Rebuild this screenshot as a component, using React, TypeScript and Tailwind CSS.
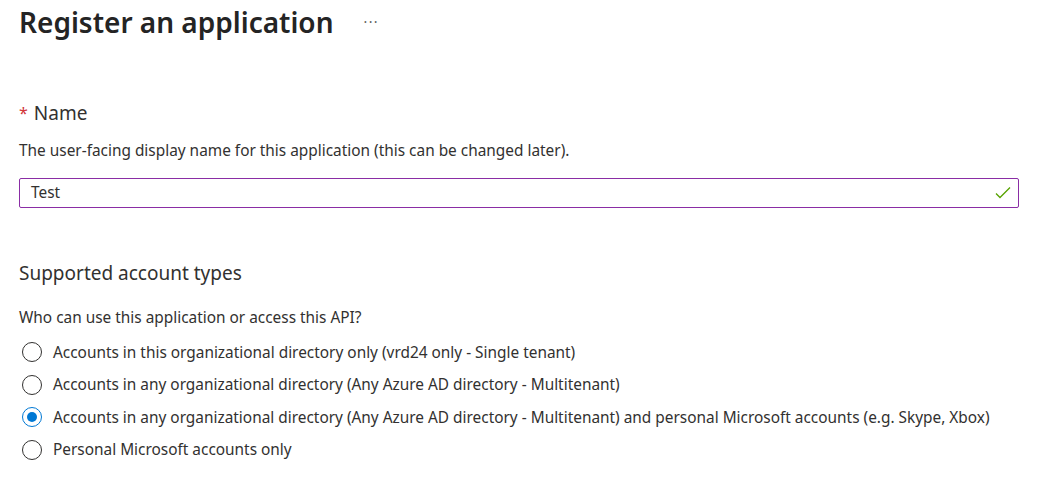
const options = [
  "Accounts in this organizational directory only (vrd24 only - Single tenant)",
  "Accounts in any organizational directory (Any Azure AD directory - Multitenant)",
  "Accounts in any organizational directory (Any Azure AD directory - Multitenant) and personal Microsoft accounts (e.g. Skype, Xbox)",
  "Personal Microsoft accounts only",
];

const Radio = ({ checked }: { checked: boolean }) => (
  <span className={`w-5 h-5 rounded-full border flex items-center justify-center shrink-0 ${checked ? "border-[#0078d4]" : "border-[#323130]"}`}>
    {checked && <span className="w-2.5 h-2.5 rounded-full bg-[#0078d4]" />}
  </span>
);

const App = () => {
  return (
    <div className="w-[1060px] h-[482px] bg-white text-[#323130] font-['Noto_Sans',sans-serif] overflow-hidden">
      <div className="pl-[19px] pr-[41px]">
        <header className="flex items-center h-[44px]">
          <h1 className="text-[28px] font-semibold text-[#242424] leading-none">Register an application</h1>
          <span className="ml-[30px] text-[#605e5c] text-sm tracking-widest">···</span>
        </header>

        <section className="mt-[57px]">
          <div className="flex items-center text-[19px] leading-6">
            <span className="text-[#d13438] text-base mr-[6px]">*</span>
            <span>Name</span>
          </div>
          <p className="mt-[16px] text-[15.4px] leading-5">The user-facing display name for this application (this can be changed later).</p>
          <div className="mt-[17px] h-[30px] border border-[#8a2da5] rounded-[2px] flex items-center pl-[11px] pr-[7px]">
            <span className="flex-1 text-[15.4px]">Test</span>
            <svg width="16" height="16" viewBox="0 0 16 16" fill="none">
              <path d="M1 8.5 L5 12.5 L15 2.5" stroke="#57a300" strokeWidth="1.3" />
            </svg>
          </div>
        </section>

        <section className="mt-[53px]">
          <h2 className="text-[19px] leading-6">Supported account types</h2>
          <p className="mt-[23px] text-[15.4px] leading-5">Who can use this application or access this API?</p>
          <div className="mt-[8px] flex flex-col">
            {options.map((o, i) => (
              <label key={i} className="flex items-center h-[32.5px] pl-[3px] gap-[11px] text-[15.4px]">
                <Radio checked={i === 2} />
                <span>{o}</span>
              </label>
            ))}
          </div>
        </section>
      </div>
    </div>
  );
};

export default App;
